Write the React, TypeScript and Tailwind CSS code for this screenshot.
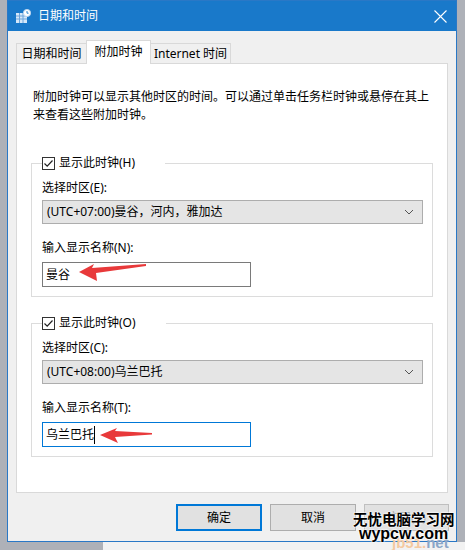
import React from 'react';

const font = "font-['Noto_Sans','Noto_Sans_CJK_SC',sans-serif]";

function CheckBox() {
  return (
    <svg width="13" height="13" viewBox="0 0 13 13" className="shrink-0">
      <rect x="0.5" y="0.5" width="12" height="12" fill="#fff" stroke="#333" />
      <path d="M2.5 6.5 L5.2 9.2 L10.5 3.5" fill="none" stroke="#222" strokeWidth="1.2" />
    </svg>
  );
}

function Chevron() {
  return (
    <svg width="10" height="6" viewBox="0 0 10 6">
      <path d="M1 1 L5 5 L9 1" fill="none" stroke="#555" strokeWidth="1" />
    </svg>
  );
}

function ClockGroup(props: { legend: string; zoneLabel: string; zone: string; nameLabel: string; name: string; focused?: boolean; top: string }) {
  return (
    <fieldset className={`${props.top} w-[402px] border border-[#dcdcdc] pl-[10px] pb-[9px]`}>
      <legend className="flex h-[18px] items-center gap-[4px] pr-[30px] leading-[18px]">
        <CheckBox />
        <span>{props.legend}</span>
      </legend>
      <div className="mt-[7px] leading-[18px]">{props.zoneLabel}</div>
      <div className="mt-[3px] h-[24px] w-[381px] flex items-center justify-between bg-[#e5e5e5] border border-[#adadad] pl-[4px] pr-[8px]">
        <span>{props.zone}</span>
        <Chevron />
      </div>
      <div className="mt-[15px] leading-[18px]">{props.nameLabel}</div>
      <div
        className={`mt-[5px] h-[25px] w-[209px] flex items-center bg-white pl-[3px] border ${props.focused ? 'border-[#0078d7]' : 'border-[#7a7a7a]'}`}
      >
        <span>{props.name}</span>
        {props.focused && <span className="inline-block w-px h-[18px] bg-black" />}
      </div>
    </fieldset>
  );
}

export default function App() {
  return (
    <div className={`relative w-[465px] h-[550px] overflow-hidden bg-[#aeb1b8] ${font} text-[12px] text-black`}>
      <div className="ml-[7px] w-[450px] h-[542px] flex flex-col border border-[#2a78c6] bg-[#f0f0f0]">
        {/* title bar */}
        <div className="h-[30px] flex items-center bg-[#1979ca] pl-[8px] pr-[8px] text-white">
          <svg width="15" height="14" viewBox="0 0 15 14" className="shrink-0">
            <rect x="0" y="4" width="11" height="10" fill="#d6e8f9" />
            <path d="M0 7h11M0 10h11M3.5 4v10M7 4v10" stroke="#6ea6dc" strokeWidth="1" />
            <circle cx="11" cy="4" r="3.6" fill="#fff" stroke="#b9d3ee" />
            <path d="M11 2v2.2h1.6" fill="none" stroke="#1979ca" strokeWidth="0.9" />
          </svg>
          <span className="ml-[7px] leading-[18px]">日期和时间</span>
          <svg width="13" height="13" viewBox="0 0 13 13" className="ml-auto mr-[1px]">
            <path d="M0.5 0.5 L12.5 12.5 M12.5 0.5 L0.5 12.5" stroke="#fff" strokeWidth="1.1" />
          </svg>
        </div>

        <div className="flex-1 px-[8px] pt-[9px]">
          {/* tabs */}
          <div className="h-[23px] flex items-end">
            <div className="h-[20px] w-[70px] flex items-center justify-center border-t border-l border-[#d9d9d9] bg-[#f0f0f0]">日期和时间</div>
            <div className="relative z-10 h-[24px] w-[65px] mb-[-1px] flex items-start justify-center pt-[2px] border-t border-l border-r border-[#d9d9d9] bg-white">附加时钟</div>
            <div className="h-[20px] w-[80px] flex items-center justify-center border-t border-r border-[#d9d9d9] bg-[#f0f0f0]">Internet 时间</div>
          </div>

          {/* tab panel */}
          <div className="h-[430px] border border-[#d9d9d9] bg-white pt-[24px] pl-[14px]">
            <p className="ml-[2px] w-[400px] leading-[18px]">
              附加时钟可以显示其他时区的时间。可以通过单击任务栏时钟或悬停在其上来查看这些附加时钟。
            </p>
            <ClockGroup
              top="mt-[30px]"
              legend="显示此时钟(H)"
              zoneLabel="选择时区(E):"
              zone="(UTC+07:00)曼谷，河内，雅加达"
              nameLabel="输入显示名称(N):"
              name="曼谷"
            />
            <ClockGroup
              top="mt-[17px]"
              legend="显示此时钟(O)"
              zoneLabel="选择时区(C):"
              zone="(UTC+08:00)乌兰巴托"
              nameLabel="输入显示名称(T):"
              name="乌兰巴托"
              focused
            />
          </div>

          {/* buttons */}
          <div className="mt-[11px] mr-[-1px] flex justify-end gap-[8px]">
            <button className="h-[27px] w-[86px] bg-[#e1e1e1] border-2 border-[#0078d7]">确定</button>
            <button className="h-[27px] w-[86px] bg-[#e1e1e1] border border-[#adadad]">取消</button>
            <button className="h-[27px] w-[85px] bg-[#e1e1e1] border border-[#bfbfbf] text-[#a0a0a0]">应用(A)</button>
          </div>
        </div>
      </div>

      <div className="absolute left-[103px] right-0 bottom-0 h-[8px] bg-[#f2f2f2]" />

      {/* red annotation arrows */}
      <svg width="465" height="550" className="absolute left-0 top-0 pointer-events-none">
        <polygon points="79,272 94,264 92,268 146,264 146,266 96,273 97,281" fill="#e8393a" />
        <polygon points="100,435 117,428 115,431 152,433 152,434.5 115,437 118,443" fill="#e8393a" />
      </svg>

      {/* watermark */}
      <div className="absolute left-[392px] top-[535px] text-[15px] font-bold leading-[16px] text-[#f5c9a0] font-['Liberation_Sans',sans-serif]">
        jb51.<span className="text-[#8aa6c8]">net</span>
      </div>
      <div className="absolute left-[353px] top-[511px] text-[14.5px] font-bold leading-[17px] text-black [text-shadow:0_0_2px_#fff,0_0_2px_#fff,0_0_2px_#fff]">
        无忧电脑学习网
      </div>
      <div className="absolute left-[359px] top-[526px] text-[16px] font-bold leading-[16px] text-black font-['Liberation_Sans',sans-serif] [text-shadow:0_0_2px_#fff,0_0_2px_#fff,0_0_2px_#fff]">
        wypcw.com
      </div>
    </div>
  );
}
